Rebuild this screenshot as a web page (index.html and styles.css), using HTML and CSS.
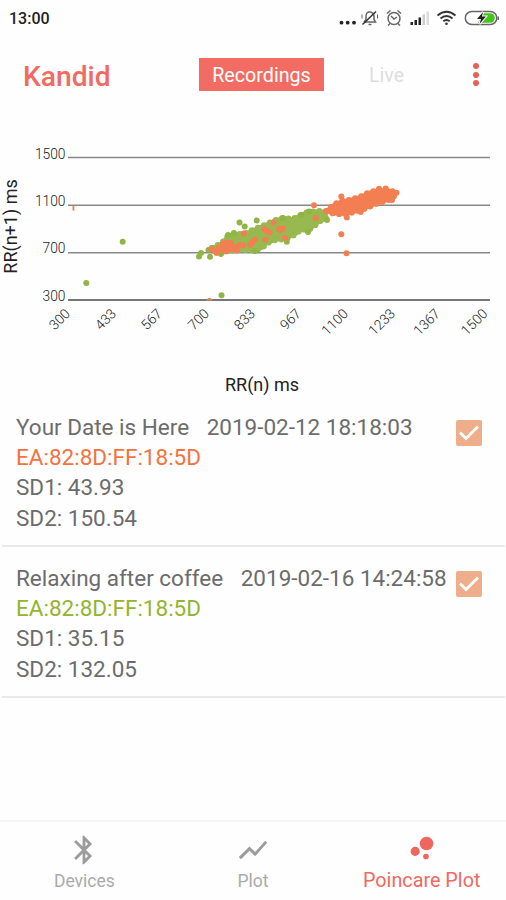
FILE: index.html
```
<!DOCTYPE html>
<html lang="en">
<head>
    <meta charset="UTF-8">
    <meta name="viewport" content="width=device-width, initial-scale=1.0">
    <title>Kandid</title>
    <link rel="stylesheet" href="styles.css">
</head>
<body>
    <div class="status-bar">
        <span class="clock">13:00</span>
        <svg class="status-icons" width="162" height="24" viewBox="338 6 162 24">
            <!-- more -->
            <g fill="#222">
                <circle cx="341.500" cy="22.700" r="1.900"/>
                <circle cx="347.700" cy="22.700" r="1.900"/>
                <circle cx="354" cy="22.700" r="1.900"/>
            </g>
            <!-- muted bell -->
            <g fill="none" stroke="#666" stroke-width="1.500">
                <path d="M364 22h11.500l-1.500-2.500v-3.500q-.5-3.500-4-4t-4 4v3.500l-2 2.500M368.500 24.500h3"/>
                <path d="M362.500 24.500L376 11.500" stroke="#333"/>
                <path d="M362 14.500v4M377.500 14.500v4" stroke-width="1"/>
            </g>
            <!-- alarm -->
            <g fill="none" stroke="#666" stroke-width="1.500">
                <circle cx="394" cy="18.500" r="6"/>
                <path d="M387 13.500l3.500-3M401 13.500l-3.500-3M391 16l3 3 3-2M390 23.500l-2 2M398 23.500l2 2"/>
            </g>
            <!-- signal -->
            <g fill="#222">
                <rect x="410.500" y="22" width="2.500" height="3"/>
                <rect x="414.500" y="20" width="2.500" height="5"/>
                <rect x="418.500" y="17.500" width="2.500" height="7.500"/>
                <rect x="422.500" y="14.500" width="2.500" height="10.500" fill="#ccc"/>
                <rect x="426.500" y="11.500" width="2.500" height="13.500" fill="#ddd"/>
            </g>
            <!-- wifi -->
            <g fill="none" stroke="#333" stroke-width="1.900">
                <path d="M437.500 15.500q9-7.500 18 0M440.500 18.500q6-5 12 0M443.300 21.300q3.200-2.600 6.400 0"/>
                <circle cx="446.500" cy="23.700" r="1.300" fill="#333" stroke="none"/>
            </g>
            <!-- battery -->
            <rect x="465.300" y="11.500" width="31.500" height="13" rx="6.500" fill="#fff" stroke="#666" stroke-width="1.500"/>
            <path d="M483 13.200h7a4.800 4.800 0 0 1 0 9.600h-12z" fill="#43c51c"/>
            <path d="M483 12l-6 7h4l-1.500 5 6.500-7.500h-4z" fill="#222" stroke="#fff" stroke-width="2" paint-order="stroke"/>
            <path d="M497.500 16.500h1.500v3.500h-1.500z" fill="#666"/>
        </svg>
    </div>

    <header class="header">
        <h1>Kandid</h1>
        <div class="tabs">
            <a class="tab active">Recordings</a>
            <a class="tab">Live</a>
        </div>
        <div class="menu"><i></i><i></i><i></i></div>
    </header>

    <svg class="chart" width="506" height="290" viewBox="0 110 506 290">
        <g class="grid">
            <path d="M68 157.500H490M68 205.300H490M68 252.800H490"/>
            <path class="axis" d="M68 300H490"/>
        </g>
        <g class="y-labels">
            <text x="65.500" y="158.500">1500</text>
            <text x="65.500" y="205.500">1100</text>
            <text x="65.500" y="253">700</text>
            <text x="65.500" y="300.500">300</text>
        </g>
        <g class="x-labels">
            <text transform="translate(71 314.500) rotate(-45)">300</text>
            <text transform="translate(117 314.500) rotate(-45)">433</text>
            <text transform="translate(163 314.500) rotate(-45)">567</text>
            <text transform="translate(210 314.500) rotate(-45)">700</text>
            <text transform="translate(256 314.500) rotate(-45)">833</text>
            <text transform="translate(302 314.500) rotate(-45)">967</text>
            <text transform="translate(349 314.500) rotate(-45)">1100</text>
            <text transform="translate(396 314.500) rotate(-45)">1233</text>
            <text transform="translate(441 314.500) rotate(-45)">1367</text>
            <text transform="translate(488.500 314.500) rotate(-45)">1500</text>
        </g>
        <text class="axis-title" text-anchor="middle" transform="translate(17 226.500) rotate(-90)">RR(n+1) ms</text>
        <text class="axis-title" text-anchor="middle" x="262" y="390.500">RR(n) ms</text>

        <!-- green recording -->
        <g class="green">
            <path id="green-cloud" d="M212 248L222 243 228 236 234 234 244 234 253 230 260 227 267 224 273 221 283 218 293 219 301 215 308 212 318 211 326 212 326 219 320 221 313 227 308 230 301 229 296 234 285 239 275 240 267 243 262 248 254 250 245 250 237 250 220 252z"/>
            <use href="#green-cloud" class="edge"/>
            <path class="dots" d="M86.300 283h0M122.700 241.800h0M221.500 295.300h0M199 256.500h0M201 253h0M210 256.800h0M208.500 250h0M239.500 222.600h0M244.700 226.400h0M256.700 220.500h0M228 235h0M234 233h0M221 254h0M254.500 251h0M309 211.500h0M308 232h0M286.800 241.800h0M301.500 214.700h0M283 218h0M212 248h0M327 220h0"/>
        </g>
        <!-- orange recording -->
        <g class="orange">
            <path id="orange-cloud" d="M326 211L335 204 342 201 350 200 360 197 368 193 378 190 386 190 392 191 395 193 394 196 391 199 385 201 378 203 371 206 361 210 353 212 347 214 338 214 331 213z"/>
            <use href="#orange-cloud" class="edge"/>
            <path class="dots" d="M314 205.300h0M315.800 218h0M341.300 196.500h0M346.800 217.500h0M341.300 234.300h0M346.500 253.300h0M396.500 192.800h0M360.700 212h0M379 188.800h0M385.700 188.500h0M392 200h0M243.800 233.500h0M211.500 249h0M215 251.500h0M219 247.500h0M223 243.500h0M227 242.500h0M216.500 253h0M222 249h0M224 251h0M228 247h0M231 243h0M233 249h0M237 250.500h0M236 247h0M240 245h0M243 245.500h0M227.500 251h0M232 246h0M250 245h0M252.500 242h0M255 239.500h0M264.500 229h0M267 231h0M269.500 232.500h0M273.500 222.500h0M279 229h0M283 228.500h0M280.500 230h0M265.500 239.500h0M285 238h0"/>
            <path class="clipped" d="M72.500 206h1.800v5l-1.800-.8zM206 300.500q3.500-5.500 7 0z"/>
        </g>
    </svg>

    <main class="recordings">
        <div class="recording">
            <div class="info">
                <p><span class="name">Your Date is Here</span>2019-02-12 18:18:03</p>
                <p class="orange-text">EA:82:8D:FF:18:5D</p>
                <p>SD1: 43.93</p>
                <p>SD2: 150.54</p>
            </div>
            <svg class="checkbox" width="26" height="26" viewBox="0 0 26 26">
                <rect width="26" height="26" rx="2"/>
                <path d="M4 12.500l6 6L22 6.500"/>
            </svg>
        </div>
        <div class="recording">
            <div class="info">
                <p><span class="name">Relaxing after coffee</span>2019-02-16 14:24:58</p>
                <p class="green-text">EA:82:8D:FF:18:5D</p>
                <p>SD1: 35.15</p>
                <p>SD2: 132.05</p>
            </div>
            <svg class="checkbox" width="26" height="26" viewBox="0 0 26 26">
                <rect width="26" height="26" rx="2"/>
                <path d="M4 12.500l6 6L22 6.500"/>
            </svg>
        </div>
    </main>

    <nav class="bottom-nav">
        <a class="nav-item">
            <svg width="34" height="34" viewBox="0 0 24 24"><path d="M17.710 7.710L12 2h-1v7.590L6.410 5 5 6.410 10.590 12 5 17.590 6.410 19 11 14.410V22h1l5.710-5.710-4.300-4.290 4.300-4.290zM13 5.830l1.880 1.880L13 9.590V5.830zm1.880 10.460L13 18.170v-3.760l1.880 1.880z"/></svg>
            <span>Devices</span>
        </a>
        <a class="nav-item">
            <svg width="34" height="34" viewBox="0 0 24 24"><path d="M3.500 18.490l6-6.010 4 4L22 6.920l-1.410-1.410-7.090 7.970-4-4L2 16.990z"/></svg>
            <span>Plot</span>
        </a>
        <a class="nav-item active">
            <svg width="34" height="34" viewBox="0 0 24 24"><circle cx="7.200" cy="14.400" r="3.200"/><circle cx="14.800" cy="18" r="2"/><circle cx="15.200" cy="8.800" r="4.800"/></svg>
            <span>Poincare Plot</span>
        </a>
    </nav>
</body>
</html>
```
FILE: styles.css
```
* {
    box-sizing: border-box;
}
body {
    font-family: Roboto, sans-serif;
    background-color: #fefefe;
    margin: 0;
    height: 900px;
    display: flex;
    flex-direction: column;
    overflow: hidden;
}
.status-bar {
    height: 36px;
    padding: 0 6px 0 9px;
    display: flex;
    align-items: center;
    justify-content: space-between;
}
.clock {
    font-size: 16px;
    font-weight: 500;
    color: #222;
    padding-top: 1px;
}
.header {
    height: 74px;
    padding: 3px 27px 0 23px;
    display: flex;
    align-items: center;
}
h1 {
    margin: 0;
    padding-top: 3px;
    width: 176px;
    font-size: 28.200px;
    font-weight: 500;
    color: #f16b62;
}
.tabs {
    display: flex;
    flex: 1;
}
.tab {
    width: 125px;
    height: 33px;
    line-height: 36px;
    text-align: center;
    font-size: 19.700px;
    color: #dedede;
}
.tab.active {
    background-color: #f26c63;
    color: #fff;
}
.menu {
    display: flex;
    flex-direction: column;
    gap: 2.500px;
}
.menu i {
    width: 6px;
    height: 6px;
    border-radius: 50%;
    background-color: #ea6055;
}

/* chart */
.chart {
    display: block;
    flex: none;
}
.grid path {
    stroke: #888;
    stroke-width: 1.500;
}
.grid .axis {
    stroke: #777;
    stroke-width: 2;
}
.y-labels, .x-labels {
    font-size: 13.800px;
    font-weight: 300;
    fill: #222;
    text-anchor: end;
}
.axis-title {
    font-size: 18px;
    fill: #222;
}
.green, .orange {
    stroke-width: 3.500;
    stroke-linejoin: round;
}
.green {
    fill: #98b850;
    stroke: #98b850;
}
.green .dots {
    stroke: #90b544;
}
.orange {
    fill: #f27e52;
    stroke: #f27e52;
}
/* scalloped outline, as if made of single points */
.edge {
    stroke-width: 6.200;
    stroke-dasharray: 0 6.500;
    stroke-linecap: round;
}
.dots {
    stroke-width: 6;
    stroke-linecap: round;
}
.clipped {
    stroke: none;
}

/* recordings list */
.recordings {
    flex: 1;
    padding: 0 1px 0 2px;
}
.recording {
    height: 151px;
    padding: 16px 23px 0 14px;
    display: flex;
    justify-content: space-between;
    border-bottom: 2px solid #e9e9e9;
}
.recording:first-child {
    height: 147px;
    padding-top: 12px;
}
.info {
    width: 430px;
    font-size: 22.500px;
    line-height: 30.200px;
    color: #6c6c6c;
    white-space: nowrap;
}
.info p {
    margin: 0;
}
.name {
    margin-right: 17.500px;
}
.info .orange-text {
    color: #f4723f;
}
.info .green-text {
    color: #93b52e;
}
.checkbox {
    flex: none;
    margin-top: 8px;
    fill: #efae8b;
}
.checkbox path {
    fill: none;
    stroke: #fff;
    stroke-width: 2.800;
}

/* bottom navigation */
.bottom-nav {
    height: 80px;
    display: flex;
    border-top: 2px solid #f5f5f5;
}
.nav-item {
    width: 169px;
    display: flex;
    flex-direction: column;
    align-items: center;
    padding-top: 11px;
    font-size: 17.500px;
    color: #aaa;
    fill: #9c9c9c;
}
.nav-item span {
    margin-top: 4px;
}
.nav-item.active {
    padding-top: 9px;
    font-size: 19.800px;
    color: #ee6a61;
    fill: #ee665d;
}
.nav-item.active span {
    margin-top: 4px;
}
```
